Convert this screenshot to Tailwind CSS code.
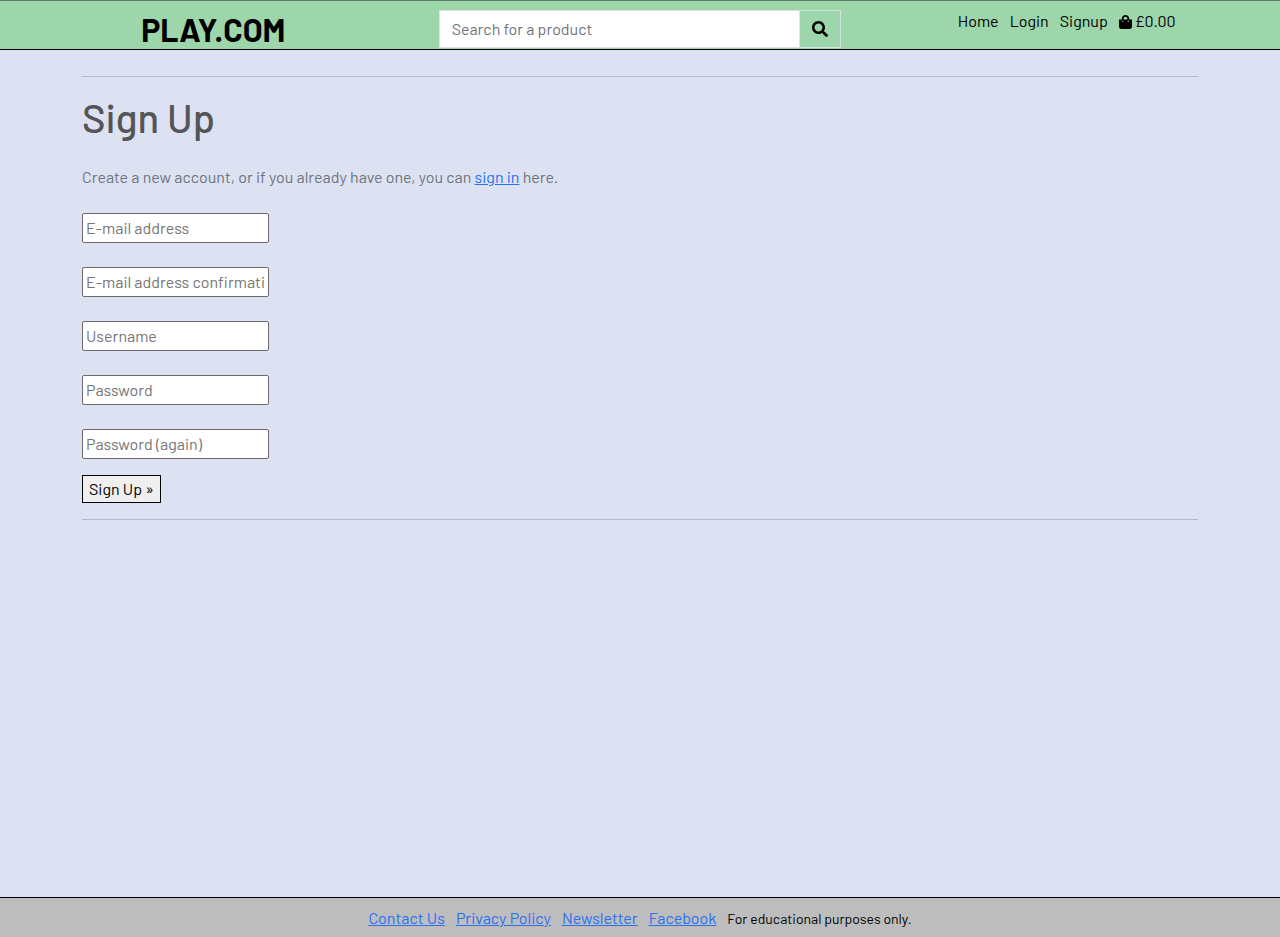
<!DOCTYPE html>
<html lang="en">
<head>
<meta charset="utf-8">
<meta name="viewport" content="width=device-width, initial-scale=1">
<title>Sign Up - PLAY.COM</title>
<script src="https://cdn.jsdelivr.net/npm/@tailwindcss/browser@4"></script>
</head>
<body class="flex min-h-screen flex-col bg-[#dde2f2] font-[Barlow,Roboto,sans-serif] text-base leading-6 text-[#212529]">
<header class="grid h-[50px] grid-cols-3 border-t border-b border-t-[#5f7a66] border-b-black bg-[#9dd6aa]">
  <a href="#" class="justify-self-center pt-2 text-[32px] leading-10 font-bold text-black">PLAY.COM</a>
  <form class="flex px-3 pt-[9px]" role="search">
    <input type="search" aria-label="Search for a product" placeholder="Search for a product" class="h-[38px] min-w-0 flex-1 border border-[#dee2e6] bg-white px-3 pb-[2px] outline-none placeholder:text-[#6f757b]">
    <button type="submit" aria-label="Search" class="flex h-[38px] w-[41px] items-center justify-center border border-l-0 border-[#cfe5da] text-black">
      <svg class="size-4" viewBox="0 0 512 512" fill="currentColor" aria-hidden="true"><path d="M505 442.700 405.300 343c-4.500-4.500-10.600-7-17-7H372c27.600-35.300 44-79.700 44-128C416 93.100 322.900 0 208 0S0 93.100 0 208s93.100 208 208 208c48.300 0 92.700-16.400 128-44v16.300c0 6.400 2.500 12.500 7 17l99.700 99.700c9.400 9.400 24.600 9.400 33.900 0l28.300-28.300c9.400-9.400 9.400-24.600.1-34zM208 336c-70.700 0-128-57.200-128-128 0-70.700 57.200-128 128-128 70.700 0 128 57.200 128 128 0 70.700-57.200 128-128 128z"/></svg>
    </button>
  </form>
  <nav class="flex items-start justify-center gap-[11px] pt-2 text-black">
    <a href="#">Home</a>
    <a href="#">Login</a>
    <a href="#">Signup</a>
    <a href="#" class="flex items-center gap-[3px]">
      <svg class="mt-[2px] h-[14px] w-[13px]" viewBox="0 0 448 512" preserveAspectRatio="none" fill="currentColor" aria-hidden="true"><path d="M352 160v-32C352 57.400 294.600 0 224 0S96 57.400 96 128v32H0v272c0 44.200 35.800 80 80 80h288c44.200 0 80-35.800 80-80V160h-96zm-192-32c0-35.300 28.700-64 64-64s64 28.700 64 64v32H160v-32zm160 120c-13.300 0-24-10.700-24-24s10.700-24 24-24 24 10.700 24 24-10.700 24-24 24zm-192 0c-13.300 0-24-10.700-24-24s10.700-24 24-24 24 10.700 24 24-10.700 24-24 24z"/></svg>
      £0.00</a>
  </nav>
</header>

<main class="mx-auto w-full max-w-[1140px] flex-1 px-3 pt-[26px]">
  <hr class="border-[#b4b9cb]">
  <h1 class="mt-4 text-[40px] leading-12 font-medium text-[#545556]">Sign Up</h1>
  <p class="mt-6 text-[#6c757d]">Create a new account, or if you already have one, you can <a href="#" class="text-[#2970f4] underline">sign in</a> here.</p>
  <form class="mt-6">
    <div class="flex flex-col items-start gap-6">
      <input type="email" aria-label="E-mail address" placeholder="E-mail address" class="h-[30px] w-[187px] rounded-[2px] border border-[#6b6b70] bg-white px-[3px] pb-[2px] placeholder:text-[#757575]">
      <input type="email" aria-label="E-mail address confirmation" placeholder="E-mail address confirmation" class="h-[30px] w-[187px] rounded-[2px] border border-[#6b6b70] bg-white px-[3px] pb-[2px] placeholder:text-[#757575]">
      <input type="text" aria-label="Username" placeholder="Username" class="h-[30px] w-[187px] rounded-[2px] border border-[#6b6b70] bg-white px-[3px] pb-[2px] placeholder:text-[#757575]">
      <input type="password" aria-label="Password" placeholder="Password" class="h-[30px] w-[187px] rounded-[2px] border border-[#6b6b70] bg-white px-[3px] pb-[2px] placeholder:text-[#757575]">
      <input type="password" aria-label="Password (again)" placeholder="Password (again)" class="h-[30px] w-[187px] rounded-[2px] border border-[#6b6b70] bg-white px-[3px] pb-[2px] placeholder:text-[#757575]">
    </div>
    <button type="submit" class="mt-4 block h-7 border border-black bg-[#efefef] px-[6px] text-black">Sign Up »</button>
  </form>
  <hr class="mt-4 border-[#b4b9cb]">
</main>

<footer class="flex h-10 items-baseline justify-center gap-[11px] border-t border-black bg-[#bdbdbd] pt-2">
  <a href="#" class="text-[#2970f4] underline">Contact Us</a>
  <a href="#" class="text-[#2970f4] underline">Privacy Policy</a>
  <a href="#" class="text-[#2970f4] underline">Newsletter</a>
  <a href="#" class="text-[#2970f4] underline">Facebook</a>
  <small class="text-sm text-black">For educational purposes only.</small>
</footer>
</body>
</html>
